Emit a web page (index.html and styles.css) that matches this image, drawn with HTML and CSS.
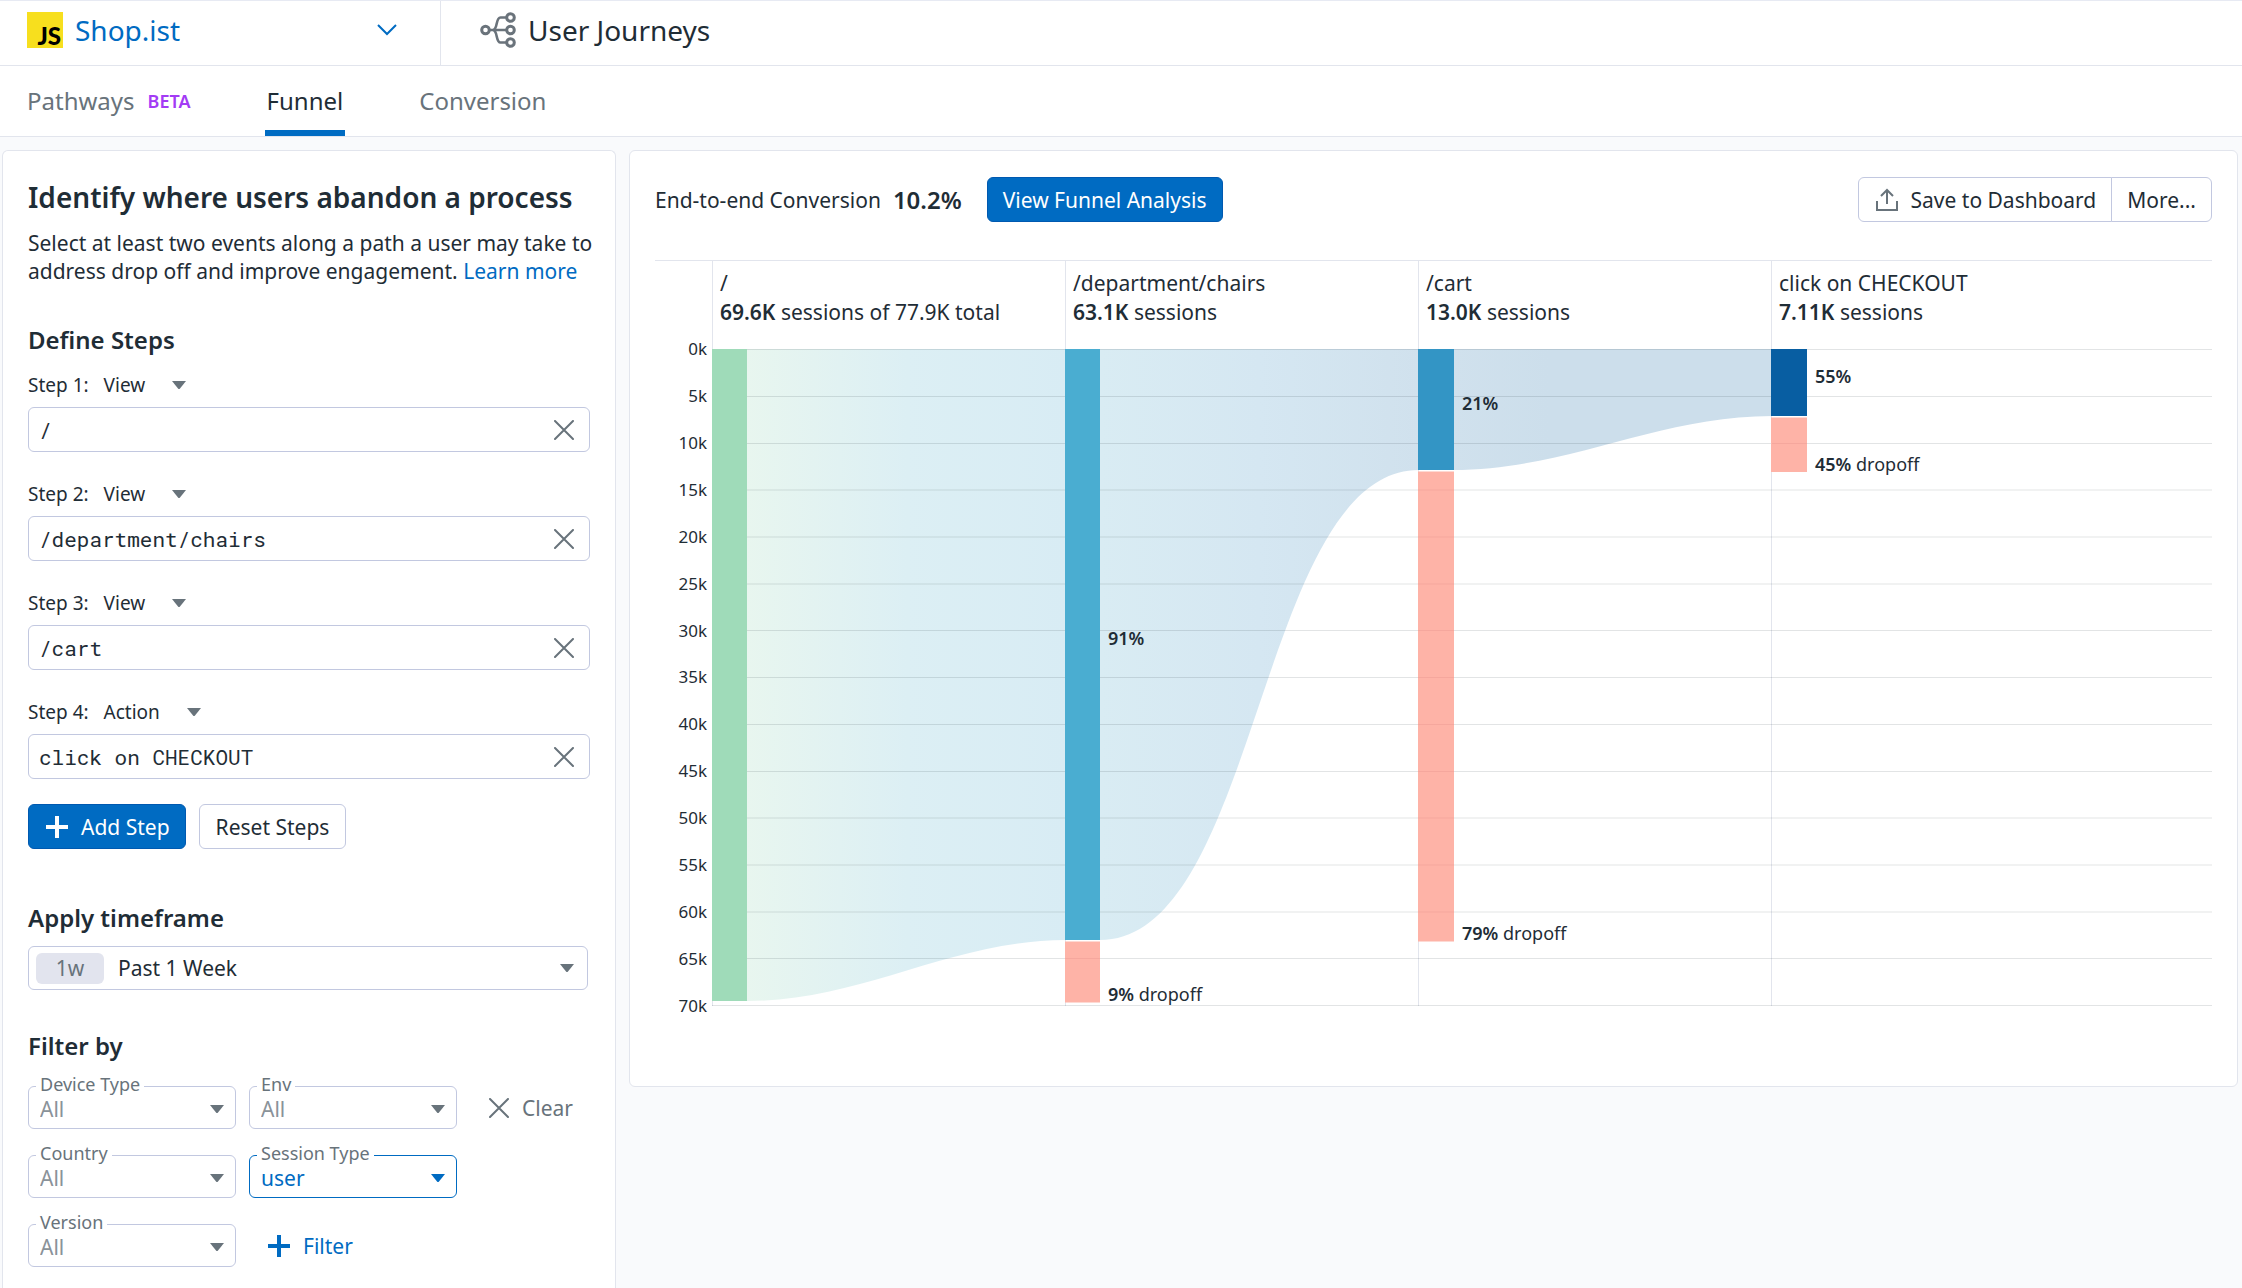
FILE: index.html
```html
<!DOCTYPE html>
<html lang="en">
<head>
<meta charset="utf-8">
<title>User Journeys</title>
<link rel="stylesheet" href="styles.css">
</head>
<body>
<svg class="defs" aria-hidden="true">
  <symbol id="i-x" viewBox="0 0 20 20"><path d="M1 1 19 19M19 1 1 19" fill="none" stroke="currentColor" stroke-width="2" stroke-linecap="round"/></symbol>
  <symbol id="i-plus" viewBox="0 0 22 22"><path d="M11 0V22M0 11H22" fill="none" stroke="currentColor" stroke-width="4"/></symbol>
  <symbol id="i-caret" viewBox="0 0 14 8"><path d="M0 0H14L8 7.500Q7 8.500 6 7.500Z" fill="currentColor"/></symbol>
</svg>
<header class="topbar">
  <button class="app-picker" type="button">
    <span class="js-logo" aria-hidden="true">JS</span>
    <span class="app-name">Shop.ist</span>
    <svg class="chevron" viewBox="0 0 20 12" aria-hidden="true"><path d="M1 1 10 10 19 1" fill="none" stroke="currentColor" stroke-width="2"/></svg>
  </button>
  <h1 class="page-title">
    <svg class="journeys-icon" viewBox="0 0 36 36" fill="none" stroke="currentColor" stroke-width="3" aria-hidden="true"><circle cx="5.500" cy="18" r="3.800"/><circle cx="30.500" cy="5.500" r="3.800"/><circle cx="30.500" cy="18" r="3.800"/><circle cx="30.500" cy="30.500" r="3.800"/><path d="M9 18H27M13 18C18 17.500 15.500 5.500 20.500 5.500H27M13 18C18 18.500 15.500 30.500 20.500 30.500H27" stroke-width="2.600"/></svg>
    User Journeys
  </h1>
</header>
<nav class="tabs">
  <a class="tab" href="#pathways">Pathways <span class="beta">BETA</span></a>
  <a class="tab tab-active" href="#funnel">Funnel</a>
  <a class="tab" href="#conversion">Conversion</a>
</nav>
<main class="content">
  <aside class="panel side">
    <h2 class="side-title">Identify where users abandon a process</h2>
    <p class="intro">Select at least two events along a path a user may take to address drop off and improve engagement. <a class="link" href="#learn">Learn more</a></p>

    <h3 class="section-title">Define Steps</h3>
    <div class="steps">
      <div class="step">
        <div class="step-head"><label for="s1">Step 1:</label><button class="kind" type="button">View<svg class="caret" aria-hidden="true"><use href="#i-caret"/></svg></button></div>
        <div class="field"><input id="s1" type="text" value="/"><button class="clear-x" type="button" aria-label="Remove step 1"><svg class="x"><use href="#i-x"/></svg></button></div>
      </div>
      <div class="step">
        <div class="step-head"><label for="s2">Step 2:</label><button class="kind" type="button">View<svg class="caret" aria-hidden="true"><use href="#i-caret"/></svg></button></div>
        <div class="field"><input id="s2" type="text" value="/department/chairs"><button class="clear-x" type="button" aria-label="Remove step 2"><svg class="x"><use href="#i-x"/></svg></button></div>
      </div>
      <div class="step">
        <div class="step-head"><label for="s3">Step 3:</label><button class="kind" type="button">View<svg class="caret" aria-hidden="true"><use href="#i-caret"/></svg></button></div>
        <div class="field"><input id="s3" type="text" value="/cart"><button class="clear-x" type="button" aria-label="Remove step 3"><svg class="x"><use href="#i-x"/></svg></button></div>
      </div>
      <div class="step">
        <div class="step-head"><label for="s4">Step 4:</label><button class="kind" type="button">Action<svg class="caret" aria-hidden="true"><use href="#i-caret"/></svg></button></div>
        <div class="field"><input id="s4" type="text" value="click on CHECKOUT"><button class="clear-x" type="button" aria-label="Remove step 4"><svg class="x"><use href="#i-x"/></svg></button></div>
      </div>
    </div>
    <div class="step-actions">
      <button class="btn btn-primary" type="button"><svg class="plus" aria-hidden="true"><use href="#i-plus"/></svg>Add Step</button>
      <button class="btn" type="button">Reset Steps</button>
    </div>

    <h3 class="section-title">Apply timeframe</h3>
    <button class="timeframe" type="button"><span class="chip">1w</span>Past 1 Week<svg class="caret caret-end" aria-hidden="true"><use href="#i-caret"/></svg></button>

    <h3 class="section-title">Filter by</h3>
    <div class="filters">
      <div class="filter"><label for="f1">Device Type</label><select id="f1"><option>All</option></select><svg class="caret" aria-hidden="true"><use href="#i-caret"/></svg></div>
      <div class="filter"><label for="f2">Env</label><select id="f2"><option>All</option></select><svg class="caret" aria-hidden="true"><use href="#i-caret"/></svg></div>
      <button class="text-btn" type="button"><svg class="x" aria-hidden="true"><use href="#i-x"/></svg>Clear</button>
      <div class="filter first"><label for="f3">Country</label><select id="f3"><option>All</option></select><svg class="caret" aria-hidden="true"><use href="#i-caret"/></svg></div>
      <div class="filter filter-on"><label for="f4">Session Type</label><select id="f4"><option>user</option></select><svg class="caret" aria-hidden="true"><use href="#i-caret"/></svg></div>
      <div class="filter first"><label for="f5">Version</label><select id="f5"><option>All</option></select><svg class="caret" aria-hidden="true"><use href="#i-caret"/></svg></div>
      <button class="text-btn add-filter" type="button"><svg class="plus" aria-hidden="true"><use href="#i-plus"/></svg>Filter</button>
    </div>
  </aside>

  <section class="panel result">
    <div class="toolbar">
      <span>End-to-end Conversion</span>
      <strong class="rate">10.2%</strong>
      <button class="btn btn-primary" type="button">View Funnel Analysis</button>
      <div class="btn-group">
        <button class="btn" type="button"><svg class="upload" viewBox="0 0 22 24" fill="none" stroke="currentColor" stroke-width="2" aria-hidden="true"><path d="M1 13V22H21V13M11 16V2M5 8 11 2 17 8"/></svg>Save to Dashboard</button>
        <button class="btn" type="button">More...</button>
      </div>
    </div>
    <div class="chart">
      <div class="axis">
        <span>0k</span><span>5k</span><span>10k</span><span>15k</span><span>20k</span><span>25k</span><span>30k</span><span>35k</span><span>40k</span><span>45k</span><span>50k</span><span>55k</span><span>60k</span><span>65k</span><span>70k</span>
      </div>
      <div class="plot">
        <div class="columns">
          <div class="col">/<br><b>69.6K</b> sessions of 77.9K total</div>
          <div class="col">/department/chairs<br><b>63.1K</b> sessions</div>
          <div class="col">/cart<br><b>13.0K</b> sessions</div>
          <div class="col">click on CHECKOUT<br><b>7.11K</b> sessions</div>
        </div>
        <svg class="funnel" viewBox="0 0 1500 657" preserveAspectRatio="none" role="img" aria-label="Funnel of sessions by step">
          <defs>
            <linearGradient id="g1"><stop offset="0" stop-color="#e8f6ef"/><stop offset=".5" stop-color="#dceff4"/><stop offset="1" stop-color="#d8ecf4"/></linearGradient>
            <linearGradient id="g2"><stop offset="0" stop-color="#d9ecf3"/><stop offset=".5" stop-color="#d5e7f2"/><stop offset="1" stop-color="#d0e1ed"/></linearGradient>
            <linearGradient id="g3"><stop offset="0" stop-color="#d0e1ed"/><stop offset=".3" stop-color="#ccdeeb"/><stop offset="1" stop-color="#ccdeeb"/></linearGradient>
          </defs>
          <path class="column-rule" d="M.5 0V657M353.500 0V657M706.500 0V657M1059.500 0V657"/>
          <path d="M35 0H354V591C239 591 150 652 35 652Z" fill="url(#g1)"/>
          <path d="M388 0H707V121C547 121 547 591 388 591Z" fill="url(#g2)"/>
          <path d="M741 0H1060V67C945 67 856 121 741 121Z" fill="url(#g3)"/>
          <path class="rule" d="M0 .5H1500M0 47.500H1500M0 94.500H1500M0 141H1500M0 188H1500M0 235H1500M0 281.500H1500M0 328.500H1500M0 375.500H1500M0 422.500H1500M0 469H1500M0 516H1500M0 563H1500M0 609.500H1500M0 656.500H1500"/>
          <path fill="#9fdbb9" d="M0 0H35V652H0Z"/>
          <path fill="#4aadd1" d="M353 0H388V591H353Z"/>
          <path fill="#3395c5" d="M706 0H742V121H706Z"/>
          <path fill="#085ea2" d="M1059 0H1095V67H1059Z"/>
          <path class="drop" d="M353 592.500H388V653.500H353ZM706 122.500H742V592.500H706ZM1059 68.500H1095V123H1059Z"/>
          <path class="drop-rule" d="M353 609.500H388M1060 94.500H1095M706 141H742M706 188H742M706 235H742M706 281.500H742M706 328.500H742M706 375.500H742M706 422.500H742M706 469H742M706 516H742M706 563H742"/>
        </svg>
        <div class="note note-c2" style="top:50.600%"><b>91%</b></div>
        <div class="note note-c2" style="top:98.400%"><b>9%</b> dropoff</div>
        <div class="note note-c3" style="top:19.100%"><b>21%</b></div>
        <div class="note note-c3" style="top:90.200%"><b>79%</b> dropoff</div>
        <div class="note note-c4" style="top:15.400%"><b>55%</b></div>
        <div class="note note-c4" style="top:27.300%"><b>45%</b> dropoff</div>
      </div>
    </div>
  </section>
</main>
</body>
</html>
```
FILE: styles.css
```css
* { box-sizing: border-box; }
body {
  margin: 0;
  min-height: 100vh;
  display: flex;
  flex-direction: column;
  overflow-x: hidden;
  background: #f9fafc;
  color: #1f2d36;
  font: 21px/28px "Noto Sans", sans-serif;
}
.defs { display: none; }
button, input, select { font: inherit; color: inherit; }
button { margin: 0; padding: 0; border: 0; background: none; }
h1, h2, h3, p { margin: 0; }
svg { flex: none; }

.topbar {
  display: flex;
  height: 66px;
  border-top: 1px solid #e7eaf3;
  border-bottom: 1px solid #e2e5ed;
  background: #fff;
}
.app-picker {
  display: flex;
  align-items: center;
  width: 441px;
  padding: 0 43px 6px 27px;
  border-right: 1px solid #e2e5ed;
  color: #006bc2;
  font-size: 28px;
}
.js-logo {
  display: flex;
  align-items: flex-end;
  justify-content: flex-end;
  width: 36px;
  height: 36px;
  margin-right: 12px;
  padding-right: 2px;
  background: #f7df1e;
  color: #000;
  font: 900 24px/24px Lato, sans-serif;
}
.chevron { width: 20px; height: 12px; margin-left: auto; }
.page-title {
  display: flex;
  align-items: center;
  gap: 12px;
  padding: 0 39px 6px;
  font-size: 28px;
  font-weight: 400;
}
.journeys-icon { width: 36px; height: 36px; color: #6a737b; }

.tabs {
  display: flex;
  gap: 72px;
  height: 71px;
  padding: 0 25px;
  border-bottom: 1px solid #e2e5ed;
  background: #fff;
  font-size: 24px;
}
.tab {
  display: flex;
  align-items: center;
  gap: 13px;
  padding: 6px 2px 0;
  border-bottom: 6px solid transparent;
  color: #68737b;
  text-decoration: none;
}
.tab-active { border-color: #006bc2; color: #1f2d36; }
.beta { color: #a33bf5; font-size: 18px; font-weight: 600; }

.content {
  flex: 1;
  display: grid;
  grid-template-columns: 614px minmax(0, 1fr);
  gap: 13px;
  align-items: start;
  padding: 13px 4px 0 2px;
}
.panel {
  border: 1px solid #e2e5ed;
  border-radius: 6px;
  background: #fff;
}
.side {
  align-self: stretch;
  padding: 25px 25px 12px;
  border-bottom: 0;
  border-radius: 6px 6px 0 0;
}
.side-title { font-size: 28px; line-height: 42px; font-weight: 600; }
.intro { margin: 11px -12px 38px 0; }
.link { color: #006bc2; text-decoration: none; }
.section-title { font-size: 24px; line-height: 34px; font-weight: 600; }

.steps { display: flex; flex-direction: column; gap: 28px; margin-top: 14px; }
.step-head { display: flex; gap: 15px; margin-bottom: 8px; font-size: 19px; }
.kind { display: flex; align-items: center; gap: 27px; }
.caret { width: 14px; height: 8px; color: #68737b; }
.field {
  display: flex;
  height: 45px;
  border: 1px solid #c2c8e0;
  border-radius: 6px;
}
.field input {
  flex: 1;
  min-width: 0;
  padding: 0 10px;
  border: 0;
  outline: 0;
  background: none;
  font: 21px "Roboto Mono", "Liberation Mono", monospace;
}
.clear-x { display: flex; align-items: center; justify-content: center; width: 50px; color: #68737b; }
.x { width: 20px; height: 20px; }
.step-actions { display: flex; gap: 13px; margin: 25px 0 52px; }
.btn {
  display: flex;
  align-items: center;
  gap: 13px;
  height: 45px;
  padding: 0 16px;
  border: 1px solid #c2c8e0;
  border-radius: 6px;
  background: #fff;
}
.btn-primary { border-color: #0059b0; background: #006bc2; color: #fff; }
.step-actions .btn-primary { padding: 0 15px 0 17px; }
.plus { width: 22px; height: 22px; }
.timeframe {
  display: flex;
  align-items: center;
  width: 560px;
  height: 44px;
  margin: 11px 0 39px;
  padding: 0 13px 0 7px;
  border: 1px solid #c2c8e0;
  border-radius: 6px;
}
.chip {
  width: 68px;
  margin-right: 14px;
  border-radius: 6px;
  background: #e2e4ee;
  color: #68737b;
  line-height: 31px;
}
.caret-end { margin-left: auto; }

.filters {
  display: grid;
  grid-template-columns: 208px 208px auto;
  justify-content: start;
  gap: 26px 13px;
  margin-top: 23px;
}
.first { grid-column: 1; }
.filter { position: relative; }
.filter label {
  position: absolute;
  top: -14px;
  left: 8px;
  padding: 0 4px;
  background: #fff;
  color: #68737b;
  font-size: 18px;
  line-height: 24px;
}
.filter select {
  display: block;
  width: 100%;
  height: 43px;
  padding: 2px 11px 0;
  border: 1px solid #c2c8e0;
  border-radius: 6px;
  background: none;
  color: #8a9299;
  appearance: none;
}
.filter .caret { position: absolute; right: 12px; top: 19px; }
.filter-on select { border-color: #006bc2; color: #006bc2; }
.filter-on .caret { color: #006bc2; }
.text-btn { display: flex; align-items: center; gap: 13px; padding-left: 19px; color: #68737b; }
.add-filter { color: #006bc2; }

.result { padding: 26px 25px 80px; }
.toolbar { display: flex; align-items: center; }
.toolbar .btn-primary { padding: 0 15px; }
.rate { margin: 0 25px 0 12px; font-size: 24px; font-weight: 600; }
.btn-group { display: flex; margin-left: auto; }
.btn-group .btn:first-child { padding: 0 15px 0 17px; border-radius: 6px 0 0 6px; }
.btn-group .btn:last-child { padding: 0 15px; margin-left: -1px; border-radius: 0 6px 6px 0; }
.upload { width: 22px; height: 24px; color: #68737b; }

.chart {
  display: grid;
  grid-template-columns: 57px minmax(0, 1fr);
  margin-top: 38px;
  border-top: 1px solid #e2e5ed;
}
.axis {
  display: flex;
  flex-direction: column;
  justify-content: space-between;
  margin: 76px 5px -12px 0;
  text-align: right;
  font-size: 17px;
  line-height: 24px;
}
.plot { position: relative; }
.columns { display: grid; grid-template-columns: 353fr 353fr 353fr 441fr; height: 88px; }
.col { padding: 8px 7px; border-left: 1px solid #e2e5ed; line-height: 29px; }
.col b, .note b { font-weight: 600; }
.funnel { display: block; width: 100%; height: 657px; }
.column-rule { fill: none; stroke: #e2e5ed; }
.rule { fill: none; stroke: #1f2d36; stroke-opacity: .13; }
.drop { fill: #feb3a7; }
.drop-rule { fill: none; stroke: #f5a79d; }
.note { position: absolute; margin-top: -12px; font-size: 18px; line-height: 24px; }
.note-c2 { left: calc(353% / 15 + 43px); }
.note-c3 { left: calc(706% / 15 + 44px); }
.note-c4 { left: calc(1059% / 15 + 44px); }
```
